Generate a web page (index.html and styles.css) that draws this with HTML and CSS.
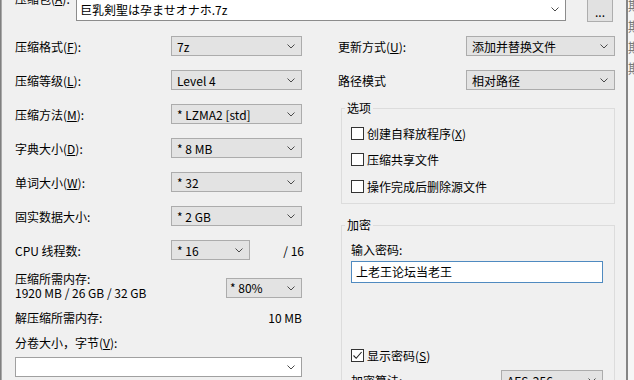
FILE: index.html
```html
<!DOCTYPE html>
<html lang="zh-CN">
<head>
  <meta charset="utf-8">
  <title>添加到压缩包</title>
  <link rel="stylesheet" href="styles.css">
</head>
<body>
  <div class="screen">
    <div class="edge-left"></div>

    <div class="dialog">
      <div class="archive-row">
        <span class="archive-label">压缩包(<u>A</u>):</span>
        <div class="combo combo-edit archive-combo">
          <span>巨乳剣聖は孕ませオナホ.7z</span>
          <svg class="chev" width="8" height="5" viewBox="0 0 8 5"><path d="M0.5 0.5 L4 4 L7.5 0.5" fill="none" stroke="#4a4a4a"/></svg>
        </div>
        <button class="browse">...</button>
      </div>

      <div class="columns">
        <div class="col-left">
          <div class="row">
            <span class="label">压缩格式(<u>F</u>):</span>
            <div class="combo"><span>7z</span><svg class="chev" width="8" height="5" viewBox="0 0 8 5"><path d="M0.5 0.5 L4 4 L7.5 0.5" fill="none" stroke="#4a4a4a"/></svg></div>
          </div>
          <div class="row">
            <span class="label">压缩等级(<u>L</u>):</span>
            <div class="combo"><span>Level 4</span><svg class="chev" width="8" height="5" viewBox="0 0 8 5"><path d="M0.5 0.5 L4 4 L7.5 0.5" fill="none" stroke="#4a4a4a"/></svg></div>
          </div>
          <div class="row">
            <span class="label">压缩方法(<u>M</u>):</span>
            <div class="combo"><span>* LZMA2 [std]</span><svg class="chev" width="8" height="5" viewBox="0 0 8 5"><path d="M0.5 0.5 L4 4 L7.5 0.5" fill="none" stroke="#4a4a4a"/></svg></div>
          </div>
          <div class="row">
            <span class="label">字典大小(<u>D</u>):</span>
            <div class="combo"><span>* 8 MB</span><svg class="chev" width="8" height="5" viewBox="0 0 8 5"><path d="M0.5 0.5 L4 4 L7.5 0.5" fill="none" stroke="#4a4a4a"/></svg></div>
          </div>
          <div class="row">
            <span class="label">单词大小(<u>W</u>):</span>
            <div class="combo"><span>* 32</span><svg class="chev" width="8" height="5" viewBox="0 0 8 5"><path d="M0.5 0.5 L4 4 L7.5 0.5" fill="none" stroke="#4a4a4a"/></svg></div>
          </div>
          <div class="row">
            <span class="label">固实数据大小:</span>
            <div class="combo"><span>* 2 GB</span><svg class="chev" width="8" height="5" viewBox="0 0 8 5"><path d="M0.5 0.5 L4 4 L7.5 0.5" fill="none" stroke="#4a4a4a"/></svg></div>
          </div>
          <div class="row row-cpu">
            <span class="label">CPU 线程数:</span>
            <div class="combo combo-cpu"><span>* 16</span><svg class="chev" width="8" height="5" viewBox="0 0 8 5"><path d="M0.5 0.5 L4 4 L7.5 0.5" fill="none" stroke="#4a4a4a"/></svg></div>
            <span class="cpu-max">/ 16</span>
          </div>

          <div class="mem">
            <div class="mem-text">
              <div>压缩所需内存:</div>
              <div>1920 MB / 26 GB / 32 GB</div>
            </div>
            <div class="combo combo-mem"><span>* 80%</span><svg class="chev" width="8" height="5" viewBox="0 0 8 5"><path d="M0.5 0.5 L4 4 L7.5 0.5" fill="none" stroke="#4a4a4a"/></svg></div>
          </div>

          <div class="decomp">
            <span>解压缩所需内存:</span>
            <span>10 MB</span>
          </div>

          <div class="volume-label">分卷大小，字节(<u>V</u>):</div>
          <div class="combo combo-edit volume-combo">
            <span></span>
            <svg class="chev" width="8" height="5" viewBox="0 0 8 5"><path d="M0.5 0.5 L4 4 L7.5 0.5" fill="none" stroke="#4a4a4a"/></svg>
          </div>
        </div>

        <div class="col-right">
          <div class="row">
            <span class="label-r">更新方式(<u>U</u>):</span>
            <div class="combo combo-r"><span>添加并替换文件</span><svg class="chev" width="8" height="5" viewBox="0 0 8 5"><path d="M0.5 0.5 L4 4 L7.5 0.5" fill="none" stroke="#4a4a4a"/></svg></div>
          </div>
          <div class="row">
            <span class="label-r">路径模式</span>
            <div class="combo combo-r"><span>相对路径</span><svg class="chev" width="8" height="5" viewBox="0 0 8 5"><path d="M0.5 0.5 L4 4 L7.5 0.5" fill="none" stroke="#4a4a4a"/></svg></div>
          </div>

          <fieldset class="group group-options">
            <legend>选项</legend>
            <div class="checks">
              <label class="check"><span class="box"></span>创建自释放程序(<u>X</u>)</label>
              <label class="check"><span class="box"></span>压缩共享文件</label>
              <label class="check"><span class="box"></span>操作完成后删除源文件</label>
            </div>
          </fieldset>

          <fieldset class="group group-crypt">
            <legend>加密</legend>
            <div class="pw-label">输入密码:</div>
            <div class="pw-input">上老王论坛当老王</div>
            <label class="check show-pw">
              <span class="box"><svg width="11" height="11" viewBox="0 0 11 11"><path d="M1.5 5.5 L4.2 8.3 L9.6 2" fill="none" stroke="#222" stroke-width="1.1"/></svg></span>显示密码(<u>S</u>)
            </label>
            <div class="algo">
              <span>加密算法:</span>
              <div class="combo combo-algo"><span>AES-256</span><svg class="chev" width="8" height="5" viewBox="0 0 8 5"><path d="M0.5 0.5 L4 4 L7.5 0.5" fill="none" stroke="#4a4a4a"/></svg></div>
            </div>
          </fieldset>
        </div>
      </div>
    </div>

    <div class="edge-right"></div>
    <div class="behind">
      <div class="behind-text">期<br>期<br>期<br>期</div>
    </div>
  </div>
</body>
</html>
```

FILE: styles.css
```css
* {
  margin: 0;
  padding: 0;
  box-sizing: border-box;
}

body {
  width: 634px;
  height: 380px;
  overflow: hidden;
  background-color: #f0f0f0;
  color: #000;
  font-family: "Noto Sans CJK SC", sans-serif;
  font-size: 12px;
}

u {
  text-decoration: underline;
  text-underline-offset: 1px;
}

.screen {
  display: flex;
  height: 380px;
}

.edge-left {
  width: 2px;
  background: linear-gradient(to right, #6c6c6c, #bdbdbd);
}

.dialog {
  width: 624px;
  padding-left: 13px;
}

.edge-right {
  width: 2px;
  background-color: #858585;
}

.behind {
  flex: 1;
  overflow: hidden;
  background-color: #f6f6f6;
}

.behind-text {
  margin-top: -6px;
  font-size: 13px;
  line-height: 21px;
  color: #7a7a7a;
}

/* top row */
.archive-row {
  display: flex;
  align-items: flex-start;
  height: 23px;
  margin-top: -2px;
}

.archive-label {
  width: 61px;
  line-height: 16px;
  margin-top: -7px;
  white-space: nowrap;
}

.browse {
  width: 26px;
  height: 23px;
  margin-left: 21px;
  margin-top: 1px;
  background-color: #e1e1e1;
  border: 1px solid #adadad;
  font-family: inherit;
  font-size: 12px;
  line-height: 14px;
  padding-top: 3px;
  color: #000;
}

/* combos */
.combo {
  display: flex;
  align-items: center;
  justify-content: space-between;
  height: 20px;
  padding: 0 6px 0 5px;
  background-color: #e3e3e3;
  border: 1px solid #acacac;
  white-space: nowrap;
}

.combo-edit {
  background-color: #fff;
  border-color: #8c8c8c;
  padding-left: 3px;
}

.archive-combo {
  width: 490px;
  height: 23px;
}

.chev {
  flex: none;
}

.columns {
  display: flex;
  gap: 36px;
  margin-top: 15px;
}

.col-left {
  width: 287px;
}

.col-right {
  width: 277px;
}

.row {
  display: flex;
  align-items: center;
  height: 20px;
  margin-bottom: 14px;
}

.label {
  width: 156px;
  flex: none;
}

.row .combo {
  width: 131px;
}

.row-cpu {
  margin-bottom: 12px;
}

.row .combo-cpu {
  width: 79px;
}

.cpu-max {
  flex: 1;
  text-align: right;
  margin-right: -2px;
}

.mem {
  display: flex;
  justify-content: space-between;
  align-items: flex-end;
  line-height: 14px;
}

.combo-mem {
  width: 76px;
  margin-bottom: 2px;
  padding-left: 3px;
}

.decomp {
  display: flex;
  justify-content: space-between;
  line-height: 20px;
  margin-top: 8px;
}

.volume-label {
  line-height: 20px;
  margin-top: 5px;
}

.volume-combo {
  width: 287px;
  margin-top: 4px;
  border-color: #a0a0a0;
}

/* right column */
.label-r {
  width: 128px;
  flex: none;
}

.row .combo-r {
  width: 149px;
}

.group {
  margin-left: 3px;
  width: 274px;
  border: 1px solid #dcdcdc;
  padding: 7px 11px 7px 9px;
}

.group legend {
  margin-left: -6px;
  padding: 0 2px;
  line-height: 16px;
}

.group-options {
  margin-top: -4px;
}

.checks {
  display: flex;
  flex-direction: column;
  gap: 6.5px;
}

.check {
  display: flex;
  align-items: center;
  height: 20px;
}

.box {
  width: 13px;
  height: 13px;
  margin-right: 3px;
  border: 1px solid #333;
  background-color: #fff;
  display: flex;
  align-items: center;
  justify-content: center;
}

.group-crypt {
  margin-top: 13px;
  height: 200px;
}

.pw-label {
  line-height: 20px;
}

.pw-input {
  width: 252px;
  height: 22px;
  margin-top: 1px;
  padding-left: 4px;
  line-height: 20px;
  background-color: #fff;
  border: 1px solid #4f8ac0;
}

.show-pw {
  margin-top: 62px;
}

.algo {
  display: flex;
  justify-content: space-between;
  align-items: center;
  height: 20px;
  margin-top: 5px;
}

.combo-algo {
  width: 102px;
}
```
